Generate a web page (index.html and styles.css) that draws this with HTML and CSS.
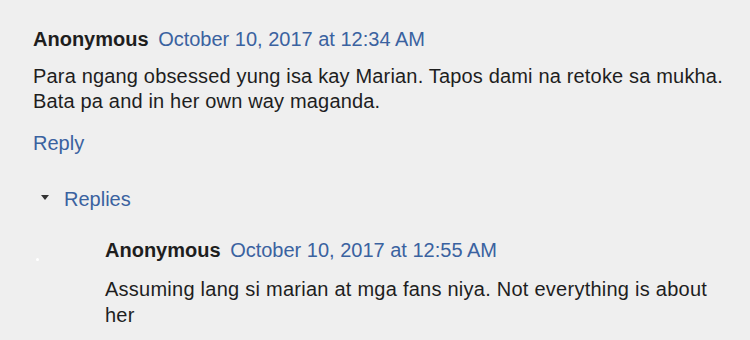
FILE: index.html
```html
<!DOCTYPE html>
<html lang="en">
<head>
    <meta charset="UTF-8">
    <title>Comments</title>
    <link rel="stylesheet" href="styles.css">
</head>
<body>
    <div class="comment">
        <div class="comment-header">
            <span class="user">Anonymous</span>
            <a class="date" href="#">October 10, 2017 at 12:34 AM</a>
        </div>
        <p class="comment-body">Para ngang obsessed yung isa kay Marian. Tapos dami na retoke sa mukha.<br>Bata pa and in her own way maganda.</p>
        <a class="reply-link" href="#">Reply</a>

        <div class="thread-toggle">
            <span class="arrow"></span>
            <a class="replies-link" href="#">Replies</a>
        </div>

        <div class="replies">
            <span class="dot"></span>
            <div class="comment-header">
                <span class="user">Anonymous</span>
                <a class="date" href="#">October 10, 2017 at 12:55 AM</a>
            </div>
            <p class="comment-body reply-body">Assuming lang si marian at mga fans niya. Not everything is about her</p>
        </div>
    </div>
</body>
</html>
```

FILE: styles.css
```css
body {
    margin: 0;
    padding: 0;
    background-color: #efefef;
    font-family: 'Liberation Sans', Arial, sans-serif;
    font-size: 20px;
    line-height: 25px;
    color: #1e1e1e;
    height: 340px;
    overflow: hidden;
}
a {
    color: #3a62a0;
    text-decoration: none;
}
.comment {
    padding: 27px 0 0 33px;
}
.comment-header {
    white-space: nowrap;
}
.user {
    font-weight: bold;
    margin-right: 4px;
}
.comment-body {
    margin: 12px 0 0 0;
    letter-spacing: 0.17px;
}
.reply-link {
    display: inline-block;
    margin-top: 17px;
}
.thread-toggle {
    display: flex;
    align-items: center;
    margin-top: 31px;
    margin-left: 8px;
}
.arrow {
    width: 0;
    height: 0;
    border-left: 4.5px solid transparent;
    border-right: 4.5px solid transparent;
    border-top: 5px solid #333;
    margin-right: 15px;
    margin-top: -4px;
}
.replies {
    position: relative;
    margin-top: 26px;
    padding-left: 72px;
    width: 620px;
}
.reply-body {
    margin-top: 13px;
    line-height: 26px;
    letter-spacing: 0.25px;
}
.dot {
    position: absolute;
    left: 3px;
    top: 20px;
    width: 3px;
    height: 3px;
    border-radius: 50%;
    background-color: #fff;
}
```
